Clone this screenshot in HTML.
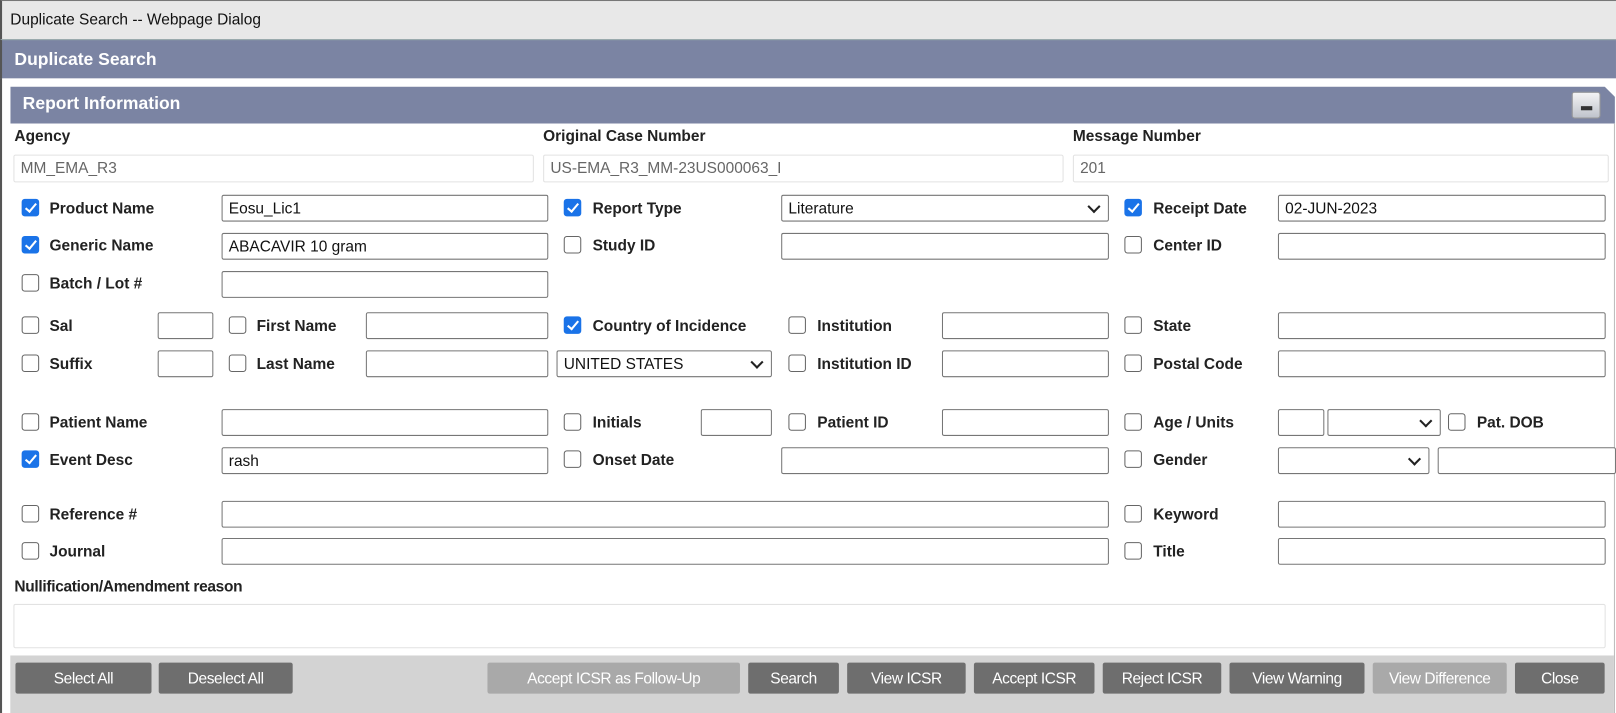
<!DOCTYPE html>
<html><head><style>
*{box-sizing:border-box;margin:0;padding:0}
body{width:1616px;height:692px;overflow:hidden;background:#fff;font-family:"Liberation Sans",Arial,sans-serif;position:relative}
#w{position:absolute;left:0;top:0;width:1568px;height:672px;transform:scale(1.0306);transform-origin:0 0}
.a{position:absolute}
.tb{left:0;top:0;width:1568px;height:38px;background:#e8e8e8;border-left:2px solid #555;border-top:1px solid #777;font-size:15px;color:#111;padding:10px 0 0 8px}
.h1{left:0;top:38px;width:1568px;height:38px;background:#7b84a3;border-left:2px solid #555;color:#fff;font-weight:bold;font-size:17px;padding:9px 0 0 12px;border-top:1px solid #9aa}
.lb{left:0;top:76px;width:2px;height:616px;background:#555}
.h2{left:10px;top:84px;width:1557px;height:36px;background:#7b84a3;color:#fff;font-weight:bold;font-size:17px;padding:7px 0 0 12px;clip-path:polygon(0 0,1547px 0,100% 10px,100% 100%,0 100%)}
.rb{left:1566px;top:120px;width:1px;height:572px;background:#bbb}
.min{left:1525px;top:89px;width:28px;height:26px;border-radius:3px;background:linear-gradient(#f4f4f4,#bfc3cc);border:1px solid #999}
.min:after{content:"";position:absolute;left:8px;top:13px;width:11px;height:4px;background:#333}
.t{font-size:15px;font-weight:bold;color:#222;margin-top:1px}
.i{border:1px solid #767676;border-radius:2px;height:26px;background:#fff;font-size:15px;color:#111;padding:4px 0 0 6px;white-space:nowrap}
.ro{border:1px solid #e2e2e2;color:#666;height:27px}
.cb{width:17px;height:17px;border:1px solid #666;border-radius:3px;background:#fff}
.ck{background:#1a73e8;border-color:#1a73e8}
.ck:after{content:"";position:absolute;left:5px;top:1px;width:4px;height:9px;border:solid #fff;border-width:0 2.5px 2.5px 0;transform:rotate(40deg)}
.sel:after{content:"";position:absolute;right:9px;top:6px;width:7px;height:7px;border:solid #222;border-width:0 2px 2px 0;transform:rotate(45deg)}
.bar{left:10px;top:636px;width:1556px;height:56px;background:#d3d3d3}
.bt{top:643px;height:30px;background:#6e6e6e;color:#fff;font-size:15px;text-align:center;padding-top:7px;border-radius:2px;letter-spacing:-0.4px}
.dis{background:#a9a9a9}
</style></head><body><div id="w">
<div class="a tb">Duplicate Search -- Webpage Dialog</div>
<div class="a h1">Duplicate Search</div>
<div class="a lb"></div>
<div class="a h2">Report Information</div>
<div class="a min"></div>
<div class="a rb"></div>

<div class="a t" style="left:14px;top:123px">Agency</div>
<div class="a t" style="left:527px;top:123px">Original Case Number</div>
<div class="a t" style="left:1041px;top:123px">Message Number</div>
<div class="a i ro" style="left:13px;top:150px;width:505px">MM_EMA_R3</div>
<div class="a i ro" style="left:527px;top:150px;width:505px">US-EMA_R3_MM-23US000063_I</div>
<div class="a i ro" style="left:1041px;top:150px;width:520px">201</div>

<div class="a cb ck" style="left:21px;top:193px"></div><div class="a t" style="left:48px;top:193px">Product Name</div>
<div class="a i" style="left:215px;top:189px;width:317px">Eosu_Lic1</div>
<div class="a cb ck" style="left:547px;top:193px"></div><div class="a t" style="left:575px;top:193px">Report Type</div>
<div class="a i sel" style="left:758px;top:189px;width:318px">Literature</div>
<div class="a cb ck" style="left:1091px;top:193px"></div><div class="a t" style="left:1119px;top:193px">Receipt Date</div>
<div class="a i" style="left:1240px;top:189px;width:318px">02-JUN-2023</div>

<div class="a cb ck" style="left:21px;top:229px"></div><div class="a t" style="left:48px;top:229px">Generic Name</div>
<div class="a i" style="left:215px;top:226px;width:317px">ABACAVIR 10 gram</div>
<div class="a cb" style="left:547px;top:229px"></div><div class="a t" style="left:575px;top:229px">Study ID</div>
<div class="a i" style="left:758px;top:226px;width:318px"></div>
<div class="a cb" style="left:1091px;top:229px"></div><div class="a t" style="left:1119px;top:229px">Center ID</div>
<div class="a i" style="left:1240px;top:226px;width:318px"></div>

<div class="a cb" style="left:21px;top:266px"></div><div class="a t" style="left:48px;top:266px">Batch / Lot #</div>
<div class="a i" style="left:215px;top:263px;width:317px"></div>

<div class="a cb" style="left:21px;top:307px"></div><div class="a t" style="left:48px;top:307px">Sal</div>
<div class="a i" style="left:153px;top:303px;width:54px"></div>
<div class="a cb" style="left:222px;top:307px"></div><div class="a t" style="left:249px;top:307px">First Name</div>
<div class="a i" style="left:355px;top:303px;width:177px"></div>
<div class="a cb ck" style="left:547px;top:307px"></div><div class="a t" style="left:575px;top:307px">Country of Incidence</div>
<div class="a cb" style="left:765px;top:307px"></div><div class="a t" style="left:793px;top:307px">Institution</div>
<div class="a i" style="left:914px;top:303px;width:162px"></div>
<div class="a cb" style="left:1091px;top:307px"></div><div class="a t" style="left:1119px;top:307px">State</div>
<div class="a i" style="left:1240px;top:303px;width:318px"></div>

<div class="a cb" style="left:21px;top:344px"></div><div class="a t" style="left:48px;top:344px">Suffix</div>
<div class="a i" style="left:153px;top:340px;width:54px"></div>
<div class="a cb" style="left:222px;top:344px"></div><div class="a t" style="left:249px;top:344px">Last Name</div>
<div class="a i" style="left:355px;top:340px;width:177px"></div>
<div class="a i sel" style="left:540px;top:340px;width:209px">UNITED STATES</div>
<div class="a cb" style="left:765px;top:344px"></div><div class="a t" style="left:793px;top:344px">Institution ID</div>
<div class="a i" style="left:914px;top:340px;width:162px"></div>
<div class="a cb" style="left:1091px;top:344px"></div><div class="a t" style="left:1119px;top:344px">Postal Code</div>
<div class="a i" style="left:1240px;top:340px;width:318px"></div>

<div class="a cb" style="left:21px;top:401px"></div><div class="a t" style="left:48px;top:401px">Patient Name</div>
<div class="a i" style="left:215px;top:397px;width:317px"></div>
<div class="a cb" style="left:547px;top:401px"></div><div class="a t" style="left:575px;top:401px">Initials</div>
<div class="a i" style="left:680px;top:397px;width:69px"></div>
<div class="a cb" style="left:765px;top:401px"></div><div class="a t" style="left:793px;top:401px">Patient ID</div>
<div class="a i" style="left:914px;top:397px;width:162px"></div>
<div class="a cb" style="left:1091px;top:401px"></div><div class="a t" style="left:1119px;top:401px">Age / Units</div>
<div class="a i" style="left:1240px;top:397px;width:45px"></div>
<div class="a i sel" style="left:1288px;top:397px;width:110px"></div>
<div class="a cb" style="left:1405px;top:401px"></div><div class="a t" style="left:1433px;top:401px">Pat. DOB</div>

<div class="a cb ck" style="left:21px;top:437px"></div><div class="a t" style="left:48px;top:437px">Event Desc</div>
<div class="a i" style="left:215px;top:434px;width:317px">rash</div>
<div class="a cb" style="left:547px;top:437px"></div><div class="a t" style="left:575px;top:437px">Onset Date</div>
<div class="a i" style="left:758px;top:434px;width:318px"></div>
<div class="a cb" style="left:1091px;top:437px"></div><div class="a t" style="left:1119px;top:437px">Gender</div>
<div class="a i sel" style="left:1240px;top:434px;width:147px"></div>
<div class="a i" style="left:1395px;top:434px;width:173px"></div>

<div class="a cb" style="left:21px;top:490px"></div><div class="a t" style="left:48px;top:490px">Reference #</div>
<div class="a i" style="left:215px;top:486px;width:861px"></div>
<div class="a cb" style="left:1091px;top:490px"></div><div class="a t" style="left:1119px;top:490px">Keyword</div>
<div class="a i" style="left:1240px;top:486px;width:318px"></div>

<div class="a cb" style="left:21px;top:526px"></div><div class="a t" style="left:48px;top:526px">Journal</div>
<div class="a i" style="left:215px;top:522px;width:861px"></div>
<div class="a cb" style="left:1091px;top:526px"></div><div class="a t" style="left:1119px;top:526px">Title</div>
<div class="a i" style="left:1240px;top:522px;width:318px"></div>

<div class="a t" style="left:14px;top:560px;letter-spacing:-0.3px">Nullification/Amendment reason</div>
<div class="a" style="left:13px;top:586px;width:1545px;height:43px;border:1px solid #e2e2e2;border-radius:2px"></div>

<div class="a bar"></div>
<div class="a bt" style="left:15px;width:132px">Select All</div>
<div class="a bt" style="left:154px;width:130px">Deselect All</div>
<div class="a bt dis" style="left:473px;width:245px">Accept ICSR as Follow-Up</div>
<div class="a bt" style="left:726px;width:88px">Search</div>
<div class="a bt" style="left:822px;width:115px">View ICSR</div>
<div class="a bt" style="left:945px;width:117px">Accept ICSR</div>
<div class="a bt" style="left:1070px;width:115px">Reject ICSR</div>
<div class="a bt" style="left:1193px;width:131px">View Warning</div>
<div class="a bt dis" style="left:1332px;width:130px">View Difference</div>
<div class="a bt" style="left:1470px;width:87px">Close</div>
</div></body></html>
